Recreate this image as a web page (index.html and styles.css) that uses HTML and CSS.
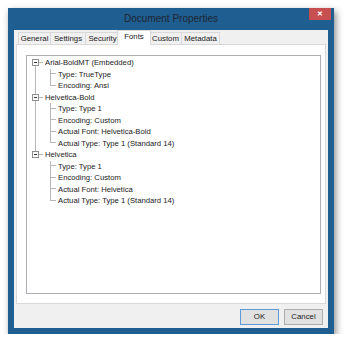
FILE: index.html
```html
<!DOCTYPE html>
<html>
<head>
    <meta charset="UTF-8">
    <title>Document Properties</title>
    <link rel="stylesheet" href="styles.css">
</head>
<body>
<div class="window">
    <div class="titlebar">
        <span></span>
        <span class="title">Document Properties</span>
        <span class="close">&#x2715;</span>
    </div>
    <div class="client">
        <div class="tabs">
            <div class="tab t-general">General</div>
            <div class="tab t-settings">Settings</div>
            <div class="tab t-security">Security</div>
            <div class="tab t-fonts active">Fonts</div>
            <div class="tab t-custom">Custom</div>
            <div class="tab t-metadata">Metadata</div>
        </div>
        <div class="panel">
            <div class="treebox">
                <ul class="tree">
                    <li class="node">
                        <div class="row"><span class="toggle"></span><span class="stub"></span><span class="label">Arial-BoldMT (Embedded)</span></div>
                        <ul class="children">
                            <li class="row leaf">Type: TrueType</li>
                            <li class="row leaf">Encoding: Ansi</li>
                        </ul>
                    </li>
                    <li class="node">
                        <div class="row"><span class="toggle"></span><span class="stub"></span><span class="label">Helvetica-Bold</span></div>
                        <ul class="children">
                            <li class="row leaf">Type: Type 1</li>
                            <li class="row leaf">Encoding: Custom</li>
                            <li class="row leaf">Actual Font: Helvetica-Bold</li>
                            <li class="row leaf">Actual Type: Type 1 (Standard 14)</li>
                        </ul>
                    </li>
                    <li class="node">
                        <div class="row"><span class="toggle"></span><span class="stub"></span><span class="label">Helvetica</span></div>
                        <ul class="children">
                            <li class="row leaf">Type: Type 1</li>
                            <li class="row leaf">Encoding: Custom</li>
                            <li class="row leaf">Actual Font: Helvetica</li>
                            <li class="row leaf">Actual Type: Type 1 (Standard 14)</li>
                        </ul>
                    </li>
                </ul>
            </div>
        </div>
        <div class="buttons">
            <div class="btn default">OK</div>
            <div class="btn">Cancel</div>
        </div>
    </div>
</div>
</body>
</html>
```

FILE: styles.css
```css
body,ul,li{margin:0;padding:0;}
body{background:#fff;font-family:"Liberation Sans",Arial,sans-serif;}
ul{list-style:none;}

.window{
    margin:8px 0 0 8px;
    width:326px;
    height:326px;
    background:#1f5e90;
    box-shadow:2px 3px 7px rgba(0,0,0,0.45);
    display:flex;
    flex-direction:column;
}
.titlebar{
    height:22px;
    display:grid;
    grid-template-columns:1fr auto 1fr;
    align-items:start;
}
.title{
    font-size:10px;
    line-height:21px;
    color:#1e2530;
}
.close{
    justify-self:end;
    margin-right:3px;
    width:22px;
    height:12px;
    background:#c74f4f;
    color:#fff;
    font-size:7px;
    line-height:12px;
    text-align:center;
    font-weight:bold;
}
.client{
    flex:1;
    margin:0 6px 6px 6px;
    background:#f0f0f0;
    display:flex;
    flex-direction:column;
}
.tabs{
    height:14px;
    display:flex;
    align-items:flex-end;
    padding-left:4px;
    position:relative;
    z-index:1;
}
.tab{
    height:12px;
    border:1px solid #d9d9d9;
    border-bottom:none;
    margin-right:-1px;
    background:#f0f0f0;
    font-size:7.8px;
    line-height:12px;
    text-align:center;
    color:#1a1a1a;
    box-sizing:border-box;
}
.t-general{width:33px;}
.t-settings{width:36px;}
.t-security{width:35px;}
.t-fonts{width:34px;}
.t-custom{width:33px;}
.t-metadata{width:39px;}
.tab.active{
    height:15px;
    margin:0 -2px -1px -2px;
    background:#fff;
    line-height:11px;
    position:relative;
}
.panel{
    height:260px;
    margin:0 2px;
    background:#fff;
    border:1px solid #d9d9d9;
    box-sizing:border-box;
    padding:10px 4px 9px 9px;
    display:flex;
}
.treebox{
    flex:1;
    border:1px solid #adadb3;
    padding:1px 0 0 5px;
    font-size:7.7px;
    color:#1a1a1a;
}
.row{
    height:11.5px;
    line-height:11.5px;
    display:flex;
    align-items:center;
    white-space:nowrap;
}
.node{position:relative;}
.node:not(:last-child)::after{
    content:"";
    position:absolute;
    left:3px;
    top:5.75px;
    height:100%;
    border-left:1px solid #b8b8b8;
}
.toggle{
    width:7px;
    height:7px;
    border:1px solid #8f8f8f;
    background:#fff;
    box-sizing:border-box;
    display:flex;
    align-items:center;
    justify-content:center;
    position:relative;
    z-index:1;
}
.toggle::before{
    content:"";
    width:3px;
    border-top:1px solid #333;
}
.stub{
    width:4px;
    border-top:1px solid #b8b8b8;
    margin-right:2px;
}
.children{margin-left:18px;}
.leaf{
    position:relative;
    padding-left:8px;
}
.leaf::before{
    content:"";
    position:absolute;
    left:0;
    top:0;
    width:6px;
    height:5.75px;
    border-left:1px solid #b8b8b8;
    border-bottom:1px solid #b8b8b8;
    box-sizing:border-box;
}
.leaf:not(:last-child)::after{
    content:"";
    position:absolute;
    left:0;
    top:5px;
    height:100%;
    border-left:1px solid #b8b8b8;
}
.buttons{
    flex:1;
    display:flex;
    justify-content:flex-end;
    align-items:flex-start;
    gap:5px;
    padding:5px 5px 0 0;
}
.btn{
    width:39px;
    height:16px;
    box-sizing:border-box;
    border:1px solid #adadad;
    background:#e1e1e1;
    font-size:7.8px;
    line-height:14px;
    text-align:center;
    color:#1a1a1a;
}
.btn.default{
    border-color:#5b9ad8;
}
```
